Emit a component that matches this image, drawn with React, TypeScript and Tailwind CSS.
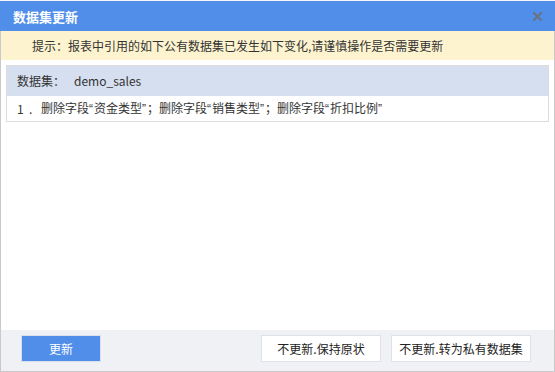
import React from "react";

const font = { fontFamily: '"Microsoft YaHei", "Noto Sans CJK SC", "Noto Sans", sans-serif' };

function Q({ c }: { c: string }) {
  return <span className="font-['Liberation_Sans'] tracking-[1px]">{c}</span>;
}

export default function App() {
  return (
    <div className="w-[555px] h-[372px] bg-white flex flex-col overflow-hidden" style={font}>
      <div className="h-[1px] bg-[#f4f4f4] shrink-0" />
      <div className="h-[30px] shrink-0 bg-[#508ee9] flex items-center justify-between pl-[13px] pr-[13px]">
        <span className="text-white text-[13px] font-bold leading-none">数据集更新</span>
        <svg width="9" height="9" viewBox="0 0 9 9" className="mt-[1px]">
          <path d="M1 1 L8 8 M8 1 L1 8" stroke="#6b7280" strokeWidth="2" strokeLinecap="square" />
        </svg>
      </div>
      <div className="flex-1 flex flex-col border-x border-b border-[#c9c9c9]">
        <div className="h-[29px] shrink-0 bg-[#fdf4cf] flex items-center pl-[31px] text-[12px] text-[#333]">
          提示：报表中引用的如下公有数据集已发生如下变化,请谨慎操作是否需要更新
        </div>
        <div className="flex-1 pt-[5px] px-[5px]">
          <div className="border border-[#dcdcdc]">
            <div className="h-[30px] bg-[#d6dfef] flex items-center pl-[10px] text-[12px] text-[#333]">
              <span>数据集：</span>
              <span className="ml-[9px]">demo_sales</span>
            </div>
            <div className="h-[25px] bg-white flex items-center pl-[10px] text-[12px] text-[#333]">
              <span className="w-[12px]">1</span>
              <span className="w-[12px]">.</span>
              <span>
                删除字段<Q c="“" />资金类型<Q c="”" />；删除字段<Q c="“" />销售类型<Q c="”" />；删除字段<Q c="“" />折扣比例<Q c="”" />
              </span>
            </div>
          </div>
        </div>
        <div className="h-[41px] shrink-0 bg-[#f0f1f5] flex items-start pt-[5px] pl-[20px] pr-[23px]">
          <button className="w-[80px] h-[27px] bg-[#508ee9] border border-[#d9e1ef] text-white text-[12px] flex items-center justify-center">
            更新
          </button>
          <div className="flex-1" />
          <button className="w-[120px] h-[27px] bg-white border border-[#dde2ec] text-[#222] text-[12px] flex items-center justify-center">
            不更新.保持原状
          </button>
          <button className="ml-[10px] w-[140px] h-[27px] bg-white border border-[#dde2ec] text-[#222] text-[12px] flex items-center justify-center">
            不更新.转为私有数据集
          </button>
        </div>
      </div>
    </div>
  );
}
